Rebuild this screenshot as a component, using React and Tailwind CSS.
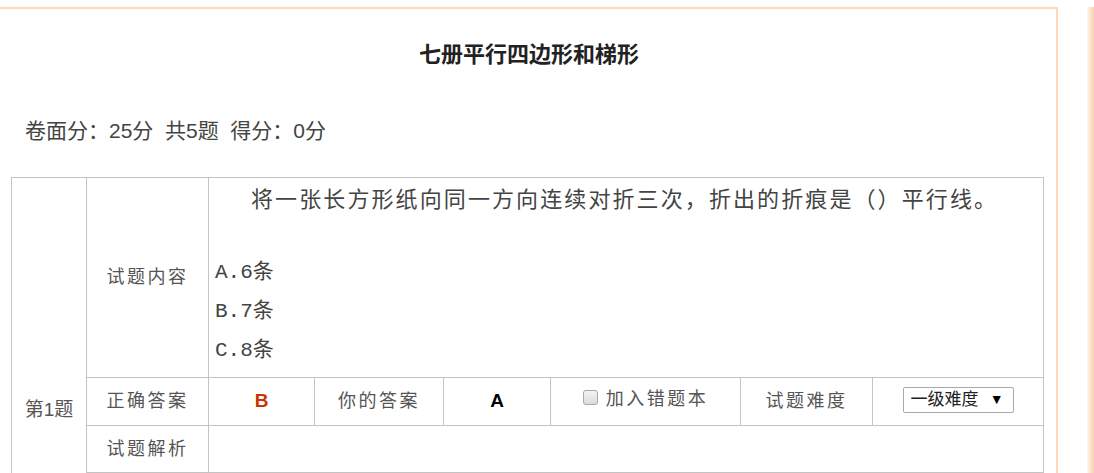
export default function App() {
  const cell = "border border-[#c4c4c4] text-center align-middle p-0"
  const label = `${cell} text-[18px] tracking-[2.5px]`
  return (
    <div className="h-[473px] overflow-hidden bg-white flex pt-[7px] font-['Liberation_Sans','Noto_Sans_CJK_SC',sans-serif] text-[#555]">
      <div className="w-[1058px] shrink-0 h-[600px] border-t-2 border-r-2 border-[#fdd9b8]">
        <h1 className="pt-[31px] h-[61px] leading-[30px] text-center text-[22px] font-bold text-[#222] pl-[2px]">七册平行四边形和梯形</h1>
        <p className="mt-[46px] ml-[25px] h-[30px] leading-[30px] text-[21px] text-[#444]">
          卷面分：25分&nbsp;&nbsp;共5题&nbsp;&nbsp;得分：0分
        </p>
        <table className="mt-[31px] ml-[11px] w-[1032px] table-fixed border-collapse border border-[#c4c4c4]">
          <colgroup>
            <col className="w-[75px]" />
            <col className="w-[122px]" />
            <col className="w-[106px]" />
            <col className="w-[129px]" />
            <col className="w-[107px]" />
            <col className="w-[190px]" />
            <col className="w-[132px]" />
            <col className="w-[171px]" />
          </colgroup>
          <tbody>
            <tr className="h-[200px]">
              <td rowSpan={5} className={`${cell} text-[19px]`}>第1题</td>
              <td className={label}>试题内容</td>
              <td colSpan={6} className={`${cell} text-left align-top pt-[2px] pb-[6px] px-[6px]`}>
                <p className="leading-[40px] text-[22px] tracking-[2.1px] indent-[36px] text-[#444]">
                  将一张长方形纸向同一方向连续对折三次，折出的折痕是（）平行线。
                </p>
                <div className="mt-[33px] text-[21px] leading-[39px] text-[#444] font-['Liberation_Mono','Noto_Sans_CJK_SC',monospace]">
                  <div>A.6条</div>
                  <div>B.7条</div>
                  <div>C.8条</div>
                </div>
              </td>
            </tr>
            <tr className="h-[48px]">
              <td className={label}>正确答案</td>
              <td className={`${cell} text-[19px] font-bold text-[#cc3300]`}>B</td>
              <td className={label}>你的答案</td>
              <td className={`${cell} text-[19px] font-bold text-black`}>A</td>
              <td className={label}>
                <div className="flex items-center justify-center gap-[8px] -mt-[4px]">
                  <span className="w-[15px] h-[15px] -mt-[5px] rounded-[3px] border border-[#a8a8a8] bg-gradient-to-b from-[#f4f4f4] to-[#dcdcdc]" />
                  <span>加入错题本</span>
                </div>
              </td>
              <td className={label}>试题难度</td>
              <td className={cell}>
                <div className="mx-auto w-[111px] h-[26px] border border-[#a9a9a9] rounded-[2px] flex items-center justify-between pl-[7px] pr-[9px] text-[17px] text-[#222] -mt-[4px]">
                  <span>一级难度</span>
                  <span className="text-[14px] text-black">▼</span>
                </div>
              </td>
            </tr>
            <tr className="h-[47px]">
              <td className={label}>试题解析</td>
              <td colSpan={6} className={cell}></td>
            </tr>
            <tr className="h-[86px]">
              <td className={cell}></td>
              <td colSpan={6} className={cell}></td>
            </tr>
            <tr className="h-[85px]">
              <td className={cell}></td>
              <td colSpan={6} className={cell}></td>
            </tr>
          </tbody>
        </table>
      </div>
      <div className="ml-auto w-[7px] h-full bg-gradient-to-r from-[#fff7f0] to-[#fbd0a8]" />
    </div>
  )
}
